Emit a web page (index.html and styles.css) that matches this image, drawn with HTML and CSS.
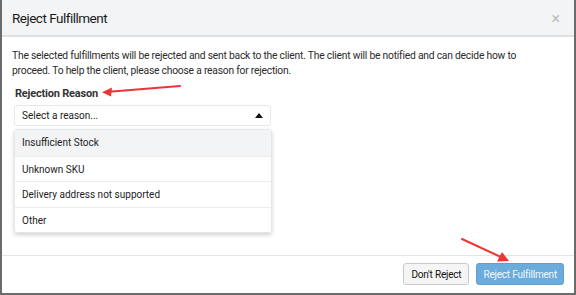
FILE: index.html
```html
<!DOCTYPE html>
<html lang="en">
<head>
    <meta charset="UTF-8">
    <title>Reject Fulfillment</title>
    <link rel="stylesheet" href="styles.css">
</head>
<body>
    <div class="modal">
        <header class="modal-header">
            <h1>Reject Fulfillment</h1>
            <span class="close">&times;</span>
        </header>
        <section class="modal-body">
            <p class="intro">The selected fulfillments will be rejected and sent back to the client. The client will be notified and can decide how to proceed. To help the client, please choose a reason for rejection.</p>
            <label class="field-label">Rejection Reason</label>
            <div class="select">
                <span>Select a reason...</span>
                <span class="caret"></span>
            </div>
            <ul class="options">
                <li class="active">Insufficient Stock</li>
                <li>Unknown SKU</li>
                <li>Delivery address not supported</li>
                <li>Other</li>
            </ul>
        </section>
        <footer class="modal-footer">
            <button class="btn btn-default">Don't Reject</button>
            <button class="btn btn-primary">Reject Fulfillment</button>
        </footer>

        <svg class="arrow arrow-label" width="84" height="16" viewBox="0 0 84 16">
            <line x1="80" y1="3" x2="6" y2="9" stroke="#ee3333" stroke-width="2" stroke-linecap="round"/>
            <path d="M2 9.3 L12 4.5 L11 13.5 Z" fill="#ee3333"/>
        </svg>
        <svg class="arrow arrow-button" width="54" height="30" viewBox="0 0 54 30">
            <line x1="3" y1="3" x2="44" y2="22" stroke="#ee3333" stroke-width="2" stroke-linecap="round"/>
            <path d="M50 25 L38 25.5 L43 16 Z" fill="#ee3333"/>
        </svg>
    </div>
</body>
</html>
```

FILE: styles.css
```css
* {
    box-sizing: border-box;
}

body {
    margin: 0;
    background: #ffffff;
    font-family: Roboto, "Liberation Sans", sans-serif;
    color: #222;
}

.modal {
    position: relative;
    display: flex;
    flex-direction: column;
    width: 576px;
    height: 295px;
    border-left: 2px solid #6b6b6b;
    border-right: 2px solid #6b6b6b;
    border-bottom: 2px solid #6b6b6b;
    background: #fff;
}

.modal-header {
    display: flex;
    align-items: center;
    justify-content: space-between;
    height: 37px;
    padding: 0 10px 0 10px;
    background: #f3f4f6;
    border-bottom: 2px solid #dedfe1;
}

.modal-header h1 {
    margin: 0;
    font-size: 13.5px;
    font-weight: 400;
    letter-spacing: -0.5px;
    color: #1a1a1a;
}

.close {
    font-size: 16px;
    color: #bcbcbc;
    margin-right: 4px;
    margin-top: 1px;
}

.modal-body {
    flex: 1;
    padding: 11px 10px 0 10px;
}

.intro {
    max-width: 505px;
    margin: 0 0 8px 0;
    font-size: 10.3px;
    letter-spacing: -0.22px;
    line-height: 15px;
    color: #2a2a2a;
}

.field-label {
    display: block;
    margin-left: 3px;
    font-size: 11px;
    font-weight: 700;
    letter-spacing: -0.2px;
    color: #333;
    line-height: 16px;
}

.select {
    display: flex;
    align-items: center;
    justify-content: space-between;
    width: 257px;
    height: 21px;
    margin: 3px 0 0 2px;
    padding: 0 7px 0 7px;
    border: 1px solid #e8e8e8;
    border-radius: 3px;
    font-size: 10px;
    color: #222;
}

.caret {
    width: 0;
    height: 0;
    border-left: 4px solid transparent;
    border-right: 4px solid transparent;
    border-bottom: 5px solid #111;
}

.options {
    list-style: none;
    width: 258px;
    margin: 3px 0 0 2px;
    padding: 0;
    border: 1px solid #e6e6e6;
    border-radius: 3px;
    box-shadow: 0 2px 4px rgba(0, 0, 0, 0.18);
    font-size: 10px;
    color: #222;
}

.options li {
    height: 25.5px;
    line-height: 25px;
    padding-left: 7px;
    border-top: 1px solid #ececec;
}

.options li:first-child {
    border-top: none;
}

.options li.active {
    background: #f3f4f6;
}

.modal-footer {
    display: flex;
    justify-content: flex-end;
    align-items: center;
    gap: 7px;
    height: 38px;
    padding: 0 10px 1px 0;
    border-top: 1px solid #e4e4e4;
}

.btn {
    height: 22px;
    padding: 0 7px;
    border-radius: 3px;
    font-family: Roboto, "Liberation Sans", sans-serif;
    font-size: 10px;
    letter-spacing: -0.2px;
    white-space: nowrap;
}

.btn-default {
    background: #f5f5f5;
    border: 1px solid #c9c9c9;
    color: #111;
}

.btn-primary {
    padding: 0 6px;
    background: #6aacdb;
    border: 1px solid #5e9fcf;
    color: #f4f8fc;
}

.arrow {
    position: absolute;
}

.arrow-label {
    left: 98px;
    top: 83px;
}

.arrow-button {
    left: 457px;
    top: 236px;
}
```
